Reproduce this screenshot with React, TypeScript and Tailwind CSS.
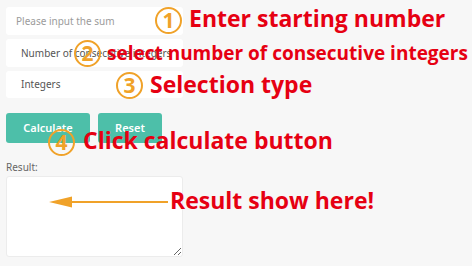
const ANNO = "font-['Open_Sans','Noto_Sans',sans-serif] font-bold text-[#e60012] leading-none whitespace-nowrap absolute";

function Num({ n, className }: { n: string; className: string }) {
  return (
    <div
      className={`absolute flex h-[27px] w-[27px] items-center justify-center rounded-full border-[2.5px] border-[#f0a229] font-['Open_Sans',sans-serif] text-[21px] font-bold leading-none text-[#f0a229] ${className}`}
    >
      {n}
    </div>
  );
}

export default function App() {
  return (
    <div className="h-[269px] w-[474px] bg-white">
      <div className="relative h-[266px] w-[472px] bg-[#f7f7f7] font-['Noto_Sans',sans-serif]">
        <div className="flex w-[183px] flex-col pl-[6px] pt-[7px]">
          <div className="flex h-[28px] items-center whitespace-nowrap rounded-[3px] bg-white px-[10px] text-[10px] text-[#9b9b9b]">
            Please input the sum
          </div>
          <div className="mt-[4px] flex h-[28px] items-center overflow-hidden whitespace-nowrap rounded-[3px] bg-white px-[15px] text-[10px] text-[#555]">
            Number of consecutive integers
          </div>
          <div className="mt-[4px] flex h-[27px] items-center rounded-[3px] bg-white px-[15px] text-[10px] text-[#555]">
            Integers
          </div>
          <div className="mt-[15px] flex gap-[8px]">
            <button className="h-[30px] w-[84px] rounded-[3px] bg-[#4dbfa9] text-[11px] font-semibold text-white">
              Calculate
            </button>
            <button className="h-[30px] w-[64px] rounded-[3px] bg-[#4dbfa9] text-[11px] font-semibold text-white">
              Reset
            </button>
          </div>
          <div className="mt-[18px] text-[10px] leading-[12px] text-[#666]">Result:</div>
          <textarea className="mt-[3px] h-[81px] w-[177px] resize-y rounded-[3px] border border-[#ececec] bg-white outline-none" />
        </div>

        <Num n="1" className="left-[155px] top-[7px]" />
        <span className={`${ANNO} left-[189px] top-[7px] text-[23px]`}>Enter starting number</span>

        <Num n="2" className="left-[74px] top-[40px]" />
        <span className={`${ANNO} left-[107px] top-[44px] text-[19px]`}>
          select number of consecutive integers
        </span>

        <Num n="3" className="left-[116px] top-[72px]" />
        <span className={`${ANNO} left-[150px] top-[73px] text-[23px]`}>Selection type</span>

        <Num n="4" className="left-[48px] top-[129px]" />
        <span className={`${ANNO} left-[83px] top-[129px] text-[23px]`}>Click calculate button</span>

        <svg className="absolute left-[46px] top-[194px]" width="124" height="16" viewBox="0 0 124 16">
          <line x1="24" y1="8" x2="122" y2="8" stroke="#f0a229" strokeWidth="2" />
          <polygon points="3,8 26,2.5 26,13.5" fill="#f0a229" />
        </svg>
        <span className={`${ANNO} left-[170px] top-[189px] text-[23px]`}>Result show here!</span>
      </div>
    </div>
  );
}
